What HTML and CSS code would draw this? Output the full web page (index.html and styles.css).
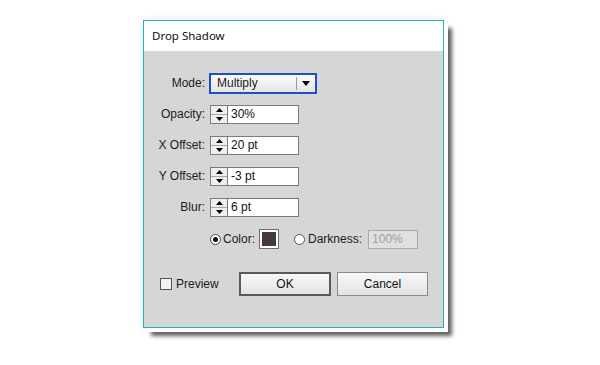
FILE: index.html
```html
<!DOCTYPE html>
<html>
<head>
<meta charset="utf-8">
<link rel="stylesheet" href="styles.css">
</head>
<body>
<div class="stage">
  <div class="dialog">
    <div class="titlebar">Drop Shadow</div>
    <div class="content">
      <div class="form">
        <div class="row">
          <span class="label">Mode:</span>
          <div class="select">
            <span class="select-value">Multiply</span>
            <span class="select-arrow"><svg width="8" height="5" viewBox="0 0 8 5"><polygon points="0,0 8,0 4,5" fill="#000"/></svg></span>
          </div>
        </div>
        <div class="row">
          <span class="label">Opacity:</span>
          <div class="spin">
            <span class="spin-btn">
              <span class="spin-half"><svg width="7" height="4" viewBox="0 0 7 4"><polygon points="0,4 3.5,0 7,4" fill="#000"/></svg></span>
              <span class="spin-half"><svg width="7" height="4" viewBox="0 0 7 4"><polygon points="0,0 7,0 3.5,4" fill="#000"/></svg></span>
            </span>
            <span class="spin-input">30%</span>
          </div>
        </div>
        <div class="row">
          <span class="label">X Offset:</span>
          <div class="spin">
            <span class="spin-btn">
              <span class="spin-half"><svg width="7" height="4" viewBox="0 0 7 4"><polygon points="0,4 3.5,0 7,4" fill="#000"/></svg></span>
              <span class="spin-half"><svg width="7" height="4" viewBox="0 0 7 4"><polygon points="0,0 7,0 3.5,4" fill="#000"/></svg></span>
            </span>
            <span class="spin-input">20 pt</span>
          </div>
        </div>
        <div class="row">
          <span class="label">Y Offset:</span>
          <div class="spin">
            <span class="spin-btn">
              <span class="spin-half"><svg width="7" height="4" viewBox="0 0 7 4"><polygon points="0,4 3.5,0 7,4" fill="#000"/></svg></span>
              <span class="spin-half"><svg width="7" height="4" viewBox="0 0 7 4"><polygon points="0,0 7,0 3.5,4" fill="#000"/></svg></span>
            </span>
            <span class="spin-input">-3 pt</span>
          </div>
        </div>
        <div class="row">
          <span class="label">Blur:</span>
          <div class="spin">
            <span class="spin-btn">
              <span class="spin-half"><svg width="7" height="4" viewBox="0 0 7 4"><polygon points="0,4 3.5,0 7,4" fill="#000"/></svg></span>
              <span class="spin-half"><svg width="7" height="4" viewBox="0 0 7 4"><polygon points="0,0 7,0 3.5,4" fill="#000"/></svg></span>
            </span>
            <span class="spin-input">6 pt</span>
          </div>
        </div>
        <div class="row color-row">
          <span class="radio checked"></span>
          <span class="text">Color:</span>
          <span class="swatch"></span>
          <span class="radio second"></span>
          <span class="text">Darkness:</span>
          <span class="disabled-input">100%</span>
        </div>
      </div>
      <div class="actions">
        <span class="checkbox"></span>
        <span class="text">Preview</span>
        <span class="btn btn-default">OK</span>
        <span class="btn">Cancel</span>
      </div>
    </div>
  </div>
</div>
</body>
</html>
```

FILE: styles.css
```css
* { box-sizing: border-box; }
html, body { margin: 0; padding: 0; background: #fff; }
body {
  font-family: "Liberation Sans", Arial, sans-serif;
  font-size: 12px;
  color: #1b1b1b;
}
.stage {
  padding: 20px 0 37px 143px;
}
.dialog {
  width: 301px;
  height: 308px;
  border: 1px solid #1fb1c6;
  background: #d6d6d6;
  box-shadow: 4px 4px 0 #fff, 8px 8px 4px rgba(0,0,0,0.62), 0 0 7px rgba(0,0,0,0.12);
  display: flex;
  flex-direction: column;
}
.titlebar {
  height: 30px;
  background: #fff;
  padding-left: 8px;
  line-height: 30px;
  font-family: "Noto Sans", "Open Sans", sans-serif;
  font-size: 11.5px;
  color: #111;
}
.content {
  padding-top: 22px;
  display: flex;
  flex-direction: column;
}
.form {
  display: flex;
  flex-direction: column;
  gap: 11px;
}
.row {
  display: flex;
  align-items: center;
  height: 20px;
}
.label {
  width: 61px;
  text-align: right;
  margin-right: 4px;
}
.select {
  width: 108px;
  height: 21px;
  border: 2px solid #1f4fc6;
  background: linear-gradient(#fbfbfb, #e6e6e6);
  display: flex;
  align-items: center;
}
.select-value {
  flex: 1;
  padding-left: 6px;
}
.select-arrow {
  width: 19px;
  height: 13px;
  border-left: 1px solid #9a9a9a;
  display: flex;
  align-items: center;
  justify-content: center;
}
.select-arrow svg { display: block; }
.spin {
  display: flex;
  height: 19px;
  margin-left: 1px;
}
.spin-btn {
  width: 18px;
  height: 19px;
  border: 1px solid #7b7b7b;
  background: #efefef;
  display: flex;
  flex-direction: column;
}
.spin-half {
  flex: 1;
  display: flex;
  align-items: center;
  justify-content: center;
}
.spin-half + .spin-half { border-top: 1px solid #a8a8a8; }
.spin-half svg { display: block; }
.spin-input {
  width: 71px;
  height: 19px;
  border: 1px solid #7b7b7b;
  border-left: none;
  background: #fff;
  padding-left: 3px;
  line-height: 17px;
  color: #111;
}
.color-row {
  padding-left: 66px;
  margin-top: 1px;
}
.radio {
  width: 11px;
  height: 11px;
  border-radius: 50%;
  border: 1px solid #444;
  background: #fff;
  margin-right: 2px;
  display: flex;
  align-items: center;
  justify-content: center;
}
.radio.checked::after {
  content: "";
  width: 5px;
  height: 5px;
  border-radius: 50%;
  background: #111;
}
.radio.second { margin-left: 15px; margin-right: 3px; border-color: #555; }
.swatch {
  width: 20px;
  height: 20px;
  margin-left: 4px;
  border: 1px solid #6e6e6e;
  background: #45393d;
  box-shadow: inset 0 0 0 2px #fff;
}
.disabled-input {
  width: 50px;
  height: 19px;
  margin-left: 6px;
  border: 1px solid #ababab;
  background: #e0e0e0;
  color: #a0a0a0;
  padding-left: 3px;
  line-height: 17px;
}
.actions {
  margin-top: 23px;
  display: flex;
  align-items: center;
  padding-left: 16px;
  padding-right: 15px;
}
.checkbox {
  width: 12px;
  height: 12px;
  border: 1px solid #555;
  background: #f2f2f2;
  margin-right: 4px;
}
.btn {
  width: 91px;
  height: 24px;
  border: 1px solid #8a8a8a;
  background: linear-gradient(#f8f8f8, #e3e3e3);
  display: flex;
  align-items: center;
  justify-content: center;
  color: #111;
}
.btn-default {
  width: 92px;
  margin-left: auto;
  margin-right: 6px;
  border: 2px solid #5a5a5a;
}
```
